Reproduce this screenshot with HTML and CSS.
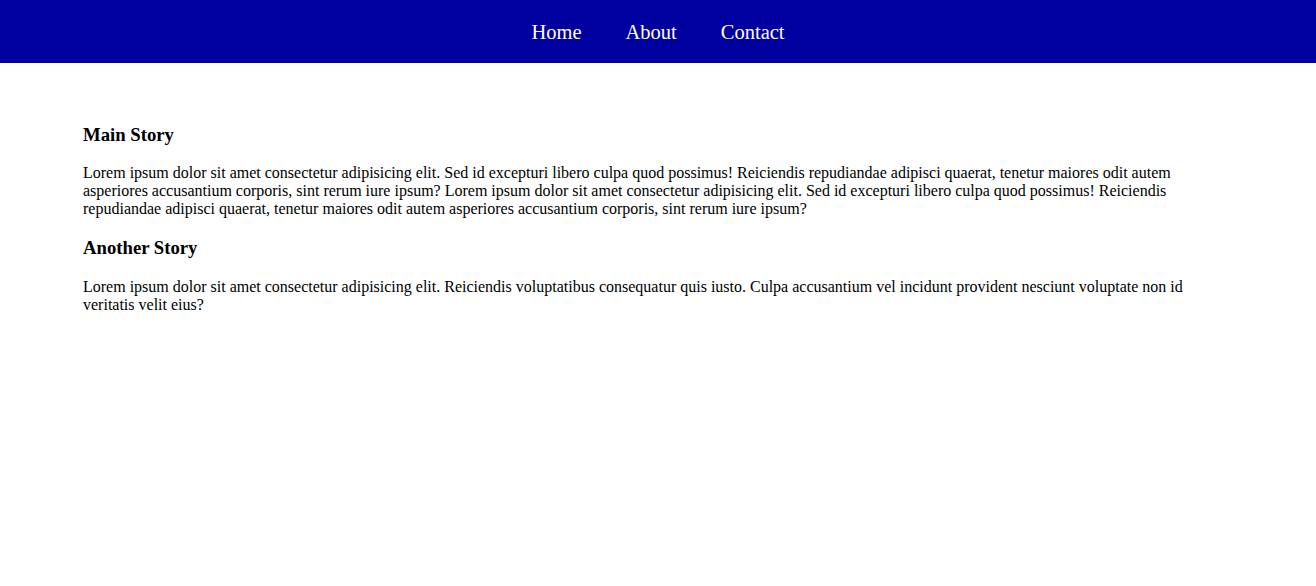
FILE: index.html
```html
<!DOCTYPE html>
<html lang="en">
<head>
<meta charset="utf-8">
<title>Stories</title>
<link rel="stylesheet" href="styles.css">
</head>
<body>
<nav class="topnav">
  <a href="#" class="nav-link">Home</a>
  <a href="#" class="nav-link">About</a>
  <a href="#" class="nav-link">Contact</a>
</nav>
<main class="content">
  <section class="story">
    <h3 class="story-title">Main Story</h3>
    <p class="story-text">Lorem ipsum dolor sit amet consectetur adipisicing elit. Sed id excepturi libero culpa quod possimus! Reiciendis repudiandae adipisci quaerat, tenetur maiores odit autem asperiores accusantium corporis, sint rerum iure ipsum? Lorem ipsum dolor sit amet consectetur adipisicing elit. Sed id excepturi libero culpa quod possimus! Reiciendis repudiandae adipisci quaerat, tenetur maiores odit autem asperiores accusantium corporis, sint rerum iure ipsum?</p>
  </section>
  <section class="story">
    <h3 class="story-title">Another Story</h3>
    <p class="story-text">Lorem ipsum dolor sit amet consectetur adipisicing elit. Reiciendis voluptatibus consequatur quis iusto. Culpa accusantium vel incidunt provident nesciunt voluptate non id veritatis velit eius?</p>
  </section>
</main>
</body>
</html>
```
FILE: styles.css
```css
html, body {
  margin: 0;
  padding: 0;
  background: #ffffff;
}

body {
  font-family: "Liberation Serif", "Times New Roman", serif;
  font-size: 16px;
  color: #000000;
}

.topnav {
  height: 63px;
  background: #0000a0;
  display: flex;
  justify-content: center;
  align-items: center;
  gap: 44px;
  padding-top: 2px;
  box-sizing: border-box;
}

.nav-link {
  color: #ffffff;
  text-decoration: none;
  font-size: 20.5px;
}

.content {
  padding: 42px 83px 0 83px;
}

.story-title {
  font-size: 1.17em;
  font-weight: bold;
  margin: 18.72px 0;
}

.story-text {
  margin: 16px 0;
}
```
